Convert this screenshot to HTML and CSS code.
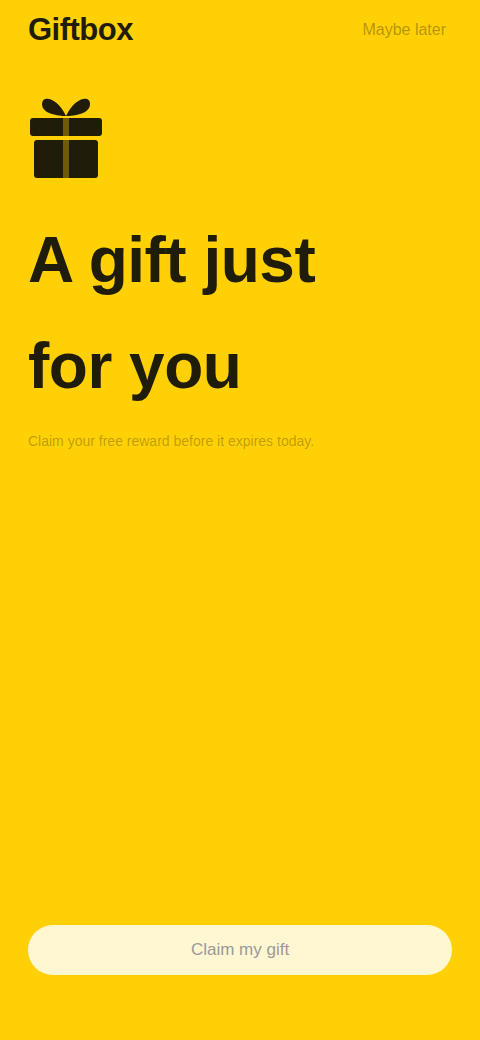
FILE: index.html
```html
<!DOCTYPE html>
<html>
<head>
  <meta charset="UTF-8">
  <title>A gift just for you</title>
  <link rel="stylesheet" href="styles.css">
</head>
<body>
  <div class="screen">
    <div class="top">
      <div class="logo">Giftbox</div>
      <div class="skip">Maybe later</div>
    </div>

    <svg class="gift" viewBox="0 0 76 86" width="76" height="86">
      <!-- bow -->
      <path d="M38 24 C30 6 14 2 14 12 C14 22 30 24 38 24 Z" fill="#1f1c0a"/>
      <path d="M38 24 C46 6 62 2 62 12 C62 22 46 24 38 24 Z" fill="#1f1c0a"/>
      <!-- lid -->
      <rect x="2" y="26" width="72" height="18" rx="3" fill="#1f1c0a"/>
      <!-- box -->
      <rect x="6" y="48" width="64" height="38" rx="3" fill="#1f1c0a"/>
      <rect x="35" y="26" width="6" height="60" fill="#ffd006" opacity="0.35"/>
    </svg>

    <h1 class="title">A gift just for you</h1>
    <p class="sub">Claim your free reward before it expires today.</p>

    <div class="spacer"></div>

    <button class="cta">Claim my gift</button>
  </div>
</body>
</html>
```

FILE: styles.css
```css
body {
  margin: 0;
  background-color: #ffd006;
  font-family: "Liberation Sans", Arial, sans-serif;
  color: #1f1c0a;
}

.screen {
  height: 1040px;
  box-sizing: border-box;
  padding: 12px 28px 65px 28px;
  display: flex;
  flex-direction: column;
}

.top {
  display: flex;
  justify-content: space-between;
  align-items: center;
  height: 36px;
}

.logo {
  font-size: 31px;
  font-weight: bold;
  letter-spacing: -0.5px;
}

.skip {
  font-size: 16px;
  color: rgba(31, 28, 10, 0.35);
  padding-right: 6px;
}

.gift {
  display: block;
  margin-top: 44px;
}

.title {
  margin: 29px 0 0 0;
  font-size: 64px;
  line-height: 106px;
  font-weight: bold;
  width: 330px;
  letter-spacing: -0.5px;
}

.sub {
  margin: 12px 0 0 0;
  font-size: 14px;
  line-height: 20px;
  color: rgba(31, 28, 10, 0.3);
}

.spacer {
  flex: 1;
}

.cta {
  height: 50px;
  border: none;
  border-radius: 25px;
  background-color: rgba(255, 255, 255, 0.82);
  font-family: "Liberation Sans", Arial, sans-serif;
  font-size: 17px;
  color: #9a9a9a;
  width: 100%;
}
```
